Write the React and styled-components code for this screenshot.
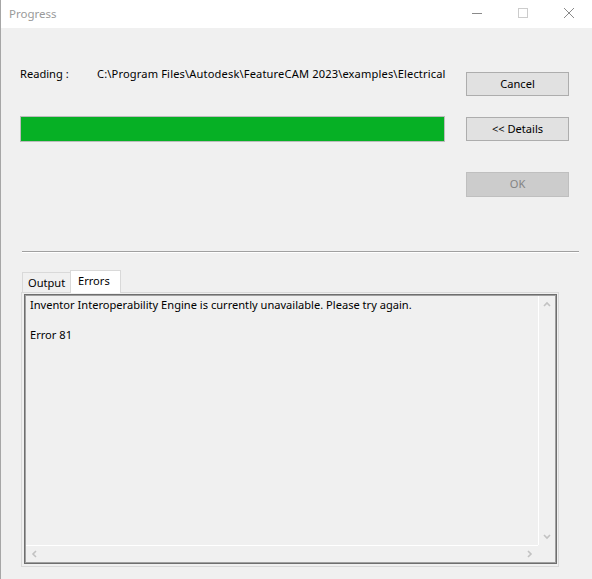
import React from "react";
import styled, { createGlobalStyle } from "styled-components";

const Global = createGlobalStyle`
  html, body { margin: 0; padding: 0; background: #f0f0f0; }
  body { font-family: "Noto Sans", "Open Sans", sans-serif; font-size: 11.1px; color: #000; }
  * { box-sizing: border-box; }
`;

const Window = styled.div`
  width: 592px;
  height: 579px;
  background: #f0f0f0;
  border-left: 1px solid #a6a6a6;
  display: flex;
  flex-direction: column;
  overflow: hidden;
`;

const TitleBar = styled.div`
  height: 28px;
  background: #fff;
  display: flex;
  align-items: center;
  flex-shrink: 0;
`;

const Title = styled.div`
  flex: 1;
  padding: 0 0 2px 8px;
  color: #9a9a9a;
  font-size: 11.5px;
`;

const CtlButton = styled.div`
  width: 46px;
  height: 28px;
  display: flex;
  align-items: center;
  justify-content: center;
  padding-bottom: 2px;
`;

const Top = styled.div`
  display: grid;
  grid-template-columns: 425px 103px;
  column-gap: 21px;
  padding: 38px 0 0 19px;
`;

const LeftCol = styled.div`
  display: flex;
  flex-direction: column;
`;

const ReadingRow = styled.div`
  display: flex;
  height: 15px;
  line-height: 15px;
  white-space: nowrap;
`;

const Label = styled.span`
  width: 77px;
  flex-shrink: 0;
`;

const Path = styled.span`
  letter-spacing: 0.15px;
`;

const ProgressTrack = styled.div`
  margin-top: 35px;
  height: 26px;
  border: 1px solid #bcbcbc;
  background: #e6e6e6;
`;

const ProgressFill = styled.div`
  height: 100%;
  background: #06b025;
`;

const RightCol = styled.div`
  display: flex;
  flex-direction: column;
  padding-top: 6px;
`;

const Button = styled.div`
  height: ${(p) => p.$h || 24}px;
  margin-top: ${(p) => p.$mt || 0}px;
  border: 1px solid ${(p) => (p.$disabled ? "#bfbfbf" : "#adadad")};
  background: ${(p) => (p.$disabled ? "#cccccc" : "#e1e1e1")};
  color: ${(p) => (p.$disabled ? "#838383" : "#000")};
  display: flex;
  align-items: center;
  justify-content: center;
  padding-bottom: 2px;
`;

const Separator = styled.div`
  margin: 54px 0 0 21px;
  width: 557px;
  height: 2px;
  border-top: 1px solid #a0a0a0;
  border-bottom: 1px solid #fff;
`;

const TabControl = styled.div`
  margin: 17px 0 0 20px;
  width: 538px;
  display: flex;
  flex-direction: column;
`;

const TabStrip = styled.div`
  height: 22px;
  display: flex;
  align-items: flex-end;
  padding-left: 1px;
  position: relative;
  z-index: 1;
`;

const Tab = styled.div`
  width: ${(p) => p.$w}px;
  height: ${(p) => (p.$active ? 23 : 20)}px;
  margin-bottom: ${(p) => (p.$active ? -1 : 0)}px;
  margin-right: ${(p) => (p.$active ? 0 : -1)}px;
  background: ${(p) => (p.$active ? "#fff" : "#f0f0f0")};
  border: 1px solid #d9d9d9;
  border-bottom: none;
  padding: ${(p) => (p.$active ? "2px 0 0 7px" : "2px 0 0 5px")};
  line-height: 15px;
`;

const TabPage = styled.div`
  height: 275px;
  border: 1px solid #d9d9d9;
  padding: 1px 1px 2px 2px;
`;

const TextBox = styled.div`
  width: 533px;
  height: 270px;
  border: 1px solid #6e6e6e;
  box-shadow: inset 0 0 0 1px #a0a0a0;
  padding: 1px;
  display: grid;
  grid-template-columns: 1fr 17px;
  grid-template-rows: 1fr 17px;
`;

const Content = styled.div`
  padding: 1px 4px;
  line-height: 15px;
  white-space: pre;
  overflow: hidden;
`;

const VScroll = styled.div`
  border-left: 1px solid #fff;
  display: flex;
  flex-direction: column;
  justify-content: space-between;
`;

const HScroll = styled.div`
  border-top: 1px solid #fff;
  display: flex;
  justify-content: space-between;
`;

const ArrowBox = styled.div`
  width: ${(p) => (p.$horiz ? 17 : 16)}px;
  height: ${(p) => (p.$horiz ? 16 : 17)}px;
  display: flex;
  align-items: center;
  justify-content: center;
`;

const Chevron = ({ dir }) => {
  const pts = {
    up: "1,5 4,2 7,5",
    down: "1,2 4,5 7,2",
    left: "5,1 2,4 5,7",
    right: "2,1 5,4 2,7",
  }[dir];
  return (
    <svg width="8" height="8" viewBox="0 0 8 8">
      <polyline points={pts} fill="none" stroke="#c2c2c2" strokeWidth="1.6" />
    </svg>
  );
};

export default function App() {
  return (
    <>
      <Global />
      <Window>
        <TitleBar>
          <Title>Progress</Title>
          <CtlButton>
            <svg width="10" height="10" viewBox="0 0 10 10">
              <line x1="0" y1="5.5" x2="10" y2="5.5" stroke="#8a8a8a" strokeWidth="1" />
            </svg>
          </CtlButton>
          <CtlButton>
            <svg width="10" height="10" viewBox="0 0 10 10">
              <rect x="0.5" y="0.5" width="9" height="9" fill="none" stroke="#cccccc" strokeWidth="1" />
            </svg>
          </CtlButton>
          <CtlButton>
            <svg width="10" height="10" viewBox="0 0 10 10">
              <path d="M0 0 L10 10 M10 0 L0 10" stroke="#8a8a8a" strokeWidth="1" />
            </svg>
          </CtlButton>
        </TitleBar>
        <Top>
          <LeftCol>
            <ReadingRow>
              <Label>Reading :</Label>
              <Path>C:\Program Files\Autodesk\FeatureCAM 2023\examples\Electrical</Path>
            </ReadingRow>
            <ProgressTrack>
              <ProgressFill style={{ width: "100%" }} />
            </ProgressTrack>
          </LeftCol>
          <RightCol>
            <Button>Cancel</Button>
            <Button $mt={21}>&lt;&lt; Details</Button>
            <Button $mt={31} $h={25} $disabled>OK</Button>
          </RightCol>
        </Top>
        <Separator />
        <TabControl>
          <TabStrip>
            <Tab $w={49}>Output</Tab>
            <Tab $w={51} $active>Errors</Tab>
          </TabStrip>
          <TabPage>
            <TextBox>
              <Content>
                {"Inventor Interoperability Engine is currently unavailable. Please try again.\n\nError 81"}
              </Content>
              <VScroll>
                <ArrowBox><Chevron dir="up" /></ArrowBox>
                <ArrowBox><Chevron dir="down" /></ArrowBox>
              </VScroll>
              <HScroll>
                <ArrowBox $horiz><Chevron dir="left" /></ArrowBox>
                <ArrowBox $horiz><Chevron dir="right" /></ArrowBox>
              </HScroll>
              <div />
            </TextBox>
          </TabPage>
        </TabControl>
      </Window>
    </>
  );
}
